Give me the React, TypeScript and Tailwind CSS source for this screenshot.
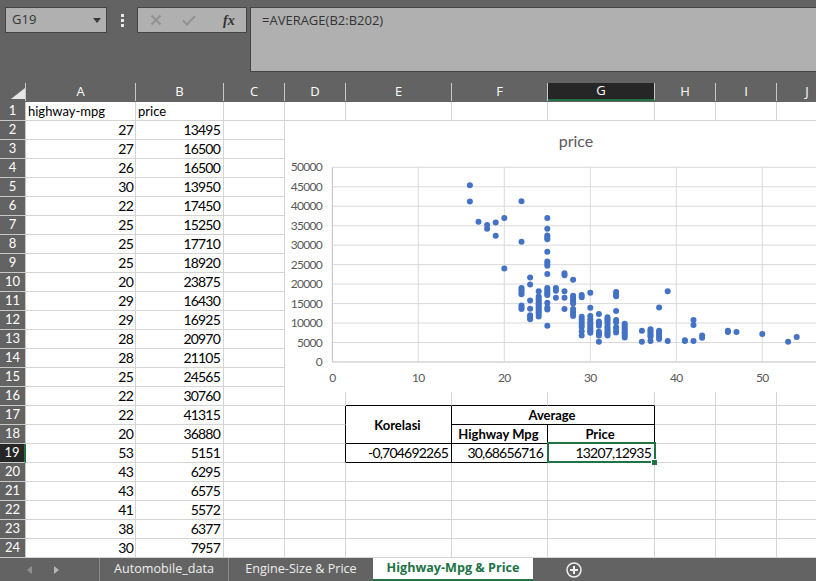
import React from "react";

const COLS = ["A", "B", "C", "D", "E", "F", "G", "H", "I", "J"];
const WIDTHS = [110, 88, 61, 61, 106, 96, 107, 61, 61, 61];

const DATA: [string | number, string | number][] = [
  ["highway-mpg", "price"], [27, 13495], [27, 16500], [26, 16500], [30, 13950], [22, 17450],
  [25, 15250], [25, 17710], [25, 18920], [20, 23875], [29, 16430], [29, 16925], [28, 20970],
  [28, 21105], [25, 24565], [22, 30760], [22, 41315], [20, 36880], [53, 5151], [43, 6295],
  [43, 6575], [41, 5572], [38, 6377], [30, 7957],
];

// mpg -> prices, read off the scatter plot
const POINTS: [number, number[]][] = [
  [16, [45400, 41200]], [17, [36000]], [18, [35200, 34200]], [19, [35800, 32400]], [20, [37000, 24000]],
  [22, [41300, 30900, 19000, 18500, 18000, 17400, 14500, 14000, 13600]],
  [23, [21700, 19900, 15800, 13700, 12000, 11500, 11000]],
  [24, [18200, 16800, 16300, 15800, 15300, 14800, 14300, 13800, 13300, 12800, 12300, 11700]],
  [25, [37000, 34200, 32500, 32000, 31500, 28300, 25800, 25200, 24700, 22600, 19000, 18500, 18000, 17500, 17200, 15200, 14000, 13500, 9300]],
  [26, [19000, 18300, 16500]], [27, [22800, 22300, 18200, 16500, 13600]],
  [28, [21100, 17000, 16500, 16000, 15500, 15000, 13600, 12900, 12300, 11800]],
  [29, [17200, 16600, 11600, 10900, 10200, 9500, 9000, 7900, 6800]],
  [30, [17800, 13900, 11800, 11000, 10300, 9800, 9300, 8800, 8300, 7900, 7500]],
  [31, [12300, 10400, 9900, 9300, 7800, 7300, 6800, 5200]],
  [32, [11500, 11000, 10500, 9900, 9100, 8600, 8100, 7600, 7200, 6800]],
  [33, [18000, 17400, 16900, 13100, 10800, 10200, 8900, 8200, 7600]],
  [34, [9800, 9300, 8800, 8300, 7800, 7300, 6800, 6300]],
  [36, [8000, 5200]], [37, [8400, 7900, 7400, 6900, 6500, 5400]], [38, [14000, 8000, 7500, 7000, 6400, 5900]],
  [39, [18200, 5400]], [41, [5600, 5400]], [42, [10800, 9500, 5400]], [43, [6800, 6250]],
  [46, [8000, 7700]], [47, [7700]], [50, [7200]], [53, [5200]], [54, [6400]],
];

const px = (mpg: number) => 47.3 + mpg * 8.6;
const py = (price: number) => 241 - (price * 194.7) / 50000;

function Chart() {
  const yTicks = [0, 5000, 10000, 15000, 20000, 25000, 30000, 35000, 40000, 45000, 50000];
  const xTicks = [0, 10, 20, 30, 40, 50];
  return (
    <div className="absolute left-[285px] top-[121px] h-[271px] w-[531px] bg-white">
      <svg width="531" height="271" className="block">
        <text x="291" y="26" textAnchor="middle" fontSize="16" fill="#595959" fontFamily="Lato, sans-serif">price</text>
        {yTicks.map((t) => (
          <g key={t}>
            <line x1={px(0)} x2="531" y1={py(t)} y2={py(t)} stroke={t === 0 ? "#bfbfbf" : "#d9d9d9"} />
            <text x="37" y={py(t) + 4} textAnchor="end" fontSize="12" letterSpacing="-0.7" fill="#595959" fontFamily="Lato, sans-serif">{t}</text>
          </g>
        ))}
        {xTicks.map((t) => (
          <g key={t}>
            <line x1={px(t)} x2={px(t)} y1={py(50000)} y2={py(0)} stroke={t === 0 ? "#bfbfbf" : "#d9d9d9"} />
            <text x={px(t)} y="261" textAnchor="middle" fontSize="12" letterSpacing="-0.7" fill="#595959" fontFamily="Lato, sans-serif">{t}</text>
          </g>
        ))}
        {POINTS.flatMap(([m, prices]) =>
          prices.map((p) => <circle key={`${m}-${p}`} cx={px(m)} cy={py(p)} r="3" fill="#4472c4" />)
        )}
      </svg>
    </div>
  );
}

function FormulaBar() {
  return (
    <div className="flex h-[83px] items-start pl-[5px] pt-[7px]">
      <div className="flex h-[26px] w-[102px] items-center justify-between border border-[#444444] bg-[#b0b0b0] pl-[6px] pr-[5px] font-['Open_Sans',sans-serif] text-[13px] text-[#333333]">
        G19
        <svg width="8" height="5" viewBox="0 0 8 5"><path d="M0 0h8L4 5z" fill="#3a3a3a" /></svg>
      </div>
      <div className="flex h-[26px] w-[30px] flex-col items-center justify-center gap-[2px]">
        <span className="h-[3px] w-[3px] bg-[#e8e8e8]" />
        <span className="h-[3px] w-[3px] bg-[#e8e8e8]" />
        <span className="h-[3px] w-[3px] bg-[#e8e8e8]" />
      </div>
      <div className="flex h-[26px] w-[110px] items-center border border-[#444444] bg-[#b0b0b0]">
        <svg width="12" height="12" viewBox="0 0 12 12" className="ml-[12px]"><path d="M1.5 1.5l9 9M10.5 1.5l-9 9" stroke="#929292" strokeWidth="2" /></svg>
        <svg width="14" height="12" viewBox="0 0 14 12" className="ml-[20px]"><path d="M1 6.5l4 4L13 2" fill="none" stroke="#929292" strokeWidth="2" /></svg>
        <span className="ml-[27px] font-['Liberation_Serif',serif] text-[14px] font-bold italic text-[#333333]">fx</span>
      </div>
      <div className="ml-[3px] h-[65px] flex-1 border-y border-l border-[#444444] bg-[#b0b0b0] pl-[11px] pt-[3px] font-['Open_Sans',sans-serif] text-[13px] leading-[18px] text-[#333333]">
        =AVERAGE(B2:B202)
      </div>
    </div>
  );
}

function HeaderRow() {
  return (
    <div className="flex h-[19px] pb-[1px]">
      <div className="relative w-[26px] shrink-0 border-r border-[#c8c8c8]">
        <svg width="14" height="11" viewBox="0 0 14 11" className="absolute left-[11px] top-[5px]"><path d="M14 0v11H0z" fill="#e6e6e6" /></svg>
      </div>
      {COLS.map((c, i) => (
        <div
          key={c}
          style={{ width: WIDTHS[i] }}
          className={`flex shrink-0 items-center justify-center border-r border-[#c8c8c8] text-[13px] text-white ${c === "G" ? "border-b-2 border-b-[#217346] bg-[#262626]" : ""}`}
        >
          {c}
        </div>
      ))}
    </div>
  );
}

function Cell({ className = "", ...rest }: React.TdHTMLAttributes<HTMLTableCellElement>) {
  return <td {...rest} className={`overflow-visible border-r border-b border-[#d4d4d4] p-0 pl-[2px] whitespace-nowrap ${className}`} />;
}

function Sheet() {
  const headCls = "border-r-black border-b-black pr-[4px] text-center font-bold";
  return (
    <table className="table-fixed border-separate border-spacing-0 font-['Lato',sans-serif] text-[13px] leading-[18px] text-black" style={{ width: 778 }}>
      <colgroup>
        {WIDTHS.map((w, i) => <col key={i} style={{ width: w }} />)}
      </colgroup>
      <tbody>
        {DATA.map(([a, b], i) => {
          const row = i + 1;
          const num = typeof a === "number";
          const numCls = "text-right text-[14px] tracking-[-0.8px]";
          return (
            <tr key={row} className="h-[19px]">
              <Cell className={num ? `${numCls} pr-[2px]` : ""}>{a}</Cell>
              <Cell className={num ? `${numCls} pr-[3px]` : ""}>{b}</Cell>
              <Cell />
              <Cell className={row >= 17 && row <= 19 ? "border-r-black" : ""} />
              {row === 17 ? (
                <>
                  <Cell rowSpan={2} className={headCls}>Korelasi</Cell>
                  <Cell colSpan={2} className={headCls}>Average</Cell>
                </>
              ) : row === 18 ? (
                <>
                  <Cell className={headCls}>Highway Mpg</Cell>
                  <Cell className={headCls}>Price</Cell>
                </>
              ) : row === 19 ? (
                <>
                  <Cell className={`border-r-black border-b-black pr-[3px] ${numCls}`}>-0,704692265</Cell>
                  <Cell className={`border-r-black border-b-black pr-[4px] ${numCls}`}>30,68656716</Cell>
                  <Cell className={`relative border-r-black border-b-black pr-[3px] ${numCls}`}>
                    13207,12935
                    <span className="absolute -left-[1px] -top-[2px] h-[21px] w-[109px] border-2 border-[#217346]" />
                    <span className="absolute -bottom-[3px] -right-[3px] h-[6px] w-[6px] border-l border-t border-white bg-[#217346]" />
                  </Cell>
                </>
              ) : (
                <>
                  <Cell className={row === 16 ? "border-b-black" : ""} />
                  <Cell className={row === 16 ? "border-b-black" : ""} />
                  <Cell className={row === 16 ? "border-b-black" : ""} />
                </>
              )}
              <Cell />
              <Cell />
              <Cell />
            </tr>
          );
        })}
      </tbody>
    </table>
  );
}

function TabBar() {
  return (
    <div className="flex h-[23px] items-stretch font-['Open_Sans',sans-serif] text-[12.6px] text-[#eeeeee]">
      <div className="flex w-[100px] items-center border-r border-[#8a8a8a] pl-[27px]">
        <svg width="5" height="8" viewBox="0 0 5 8"><path d="M5 0v8L0 4z" fill="#8f8f8f" /></svg>
        <svg width="5" height="8" viewBox="0 0 5 8" className="ml-[22px]"><path d="M0 0v8l5-4z" fill="#b5b5b5" /></svg>
      </div>
      <div className="flex w-[129px] items-center justify-center border-r border-[#8a8a8a]">Automobile_data</div>
      <div className="flex w-[144px] items-center justify-center">Engine-Size &amp; Price</div>
      <div className="flex w-[160px] items-center justify-center border-b-2 border-[#217346] bg-white font-bold text-[#217346]">Highway-Mpg &amp; Price</div>
      <div className="flex w-[82px] items-center justify-center">
        <svg width="16" height="16" viewBox="0 0 16 16">
          <circle cx="8" cy="8" r="7" fill="none" stroke="#f0f0f0" strokeWidth="1.5" />
          <path d="M8 4v8M4 8h8" stroke="#f0f0f0" strokeWidth="2" />
        </svg>
      </div>
    </div>
  );
}

export default function App() {
  return (
    <div className="relative h-[581px] w-[816px] overflow-hidden bg-[#636363]">
      <FormulaBar />
      <div className="w-[900px] font-['Open_Sans',sans-serif]">
        <HeaderRow />
      </div>
      <div className="relative h-[456px] overflow-hidden">
        <div className="flex w-[900px]">
          <div className="w-[26px] shrink-0">
            {DATA.map((_, i) => (
              <div
                key={i}
                className={`flex h-[19px] items-center justify-center border-b border-b-[#c8c8c8] font-['Lato',sans-serif] text-[13px] text-white ${
                  i === 18 ? "border-r-2 border-r-[#217346] bg-[#262626]" : "border-r border-r-[#c8c8c8]"
                }`}
              >
                {i + 1}
              </div>
            ))}
          </div>
          <div className="bg-white">
            <Sheet />
          </div>
        </div>
      </div>
      <Chart />
      <TabBar />
    </div>
  );
}
